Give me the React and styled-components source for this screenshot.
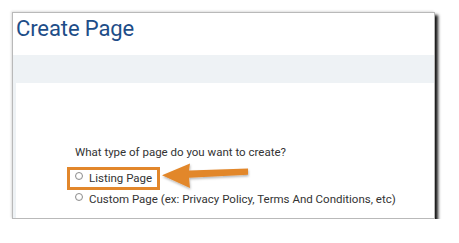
import React from "react";
import styled, { createGlobalStyle } from "styled-components";

const Global = createGlobalStyle`
  html, body { margin: 0; padding: 0; background: #ffffff; }
  body { font-family: Roboto, "Liberation Sans", Arial, sans-serif; }
`;

const Frame = styled.div`
  position: relative;
  box-sizing: border-box;
  margin: 12px 0 0 12px;
  width: 423px;
  height: 207px;
  background: #ffffff;
  border: 1px solid #b9b9b9;
  box-shadow: 3px 3px 3px rgba(0, 0, 0, 0.92), -1px -1px 2px rgba(0, 0, 0, 0.12);
  display: flex;
  flex-direction: column;
`;

const Title = styled.h1`
  margin: 0;
  height: 42px;
  box-sizing: border-box;
  padding: 3px 0 0 3px;
  font-size: 22px;
  font-weight: 400;
  line-height: 26px;
  color: #1d4d88;
  letter-spacing: -0.1px;
`;

const Band = styled.div`
  height: 28px;
  background: #eef2f5;
`;

const Content = styled.div`
  flex: 1;
  border-left: 3px solid #eef2f5;
  padding: 61px 0 0 59px;
  color: #333333;
  font-size: 11.5px;
`;

const Question = styled.div`
  line-height: 16px;
  margin-bottom: 8px;
`;

const Row = styled.label`
  position: relative;
  display: flex;
  align-items: flex-start;
  gap: 6px;
  height: 21px;
  line-height: 21px;
  white-space: nowrap;
`;

const Radio = styled.span`
  flex: none;
  box-sizing: border-box;
  width: 8px;
  height: 8px;
  margin-top: 4px;
  border-radius: 50%;
  border: 1px solid #8e8e8e;
  background: radial-gradient(circle at 50% 40%, #ffffff 40%, #e6e6e6 100%);
`;

const Highlight = styled.span`
  position: absolute;
  left: -8px;
  top: -1px;
  width: 93px;
  height: 23px;
  box-sizing: border-box;
  border: 3px solid #e2872b;
  pointer-events: none;
`;

const Arrow = styled.svg`
  position: absolute;
  left: 85px;
  top: -10px;
  overflow: visible;
  pointer-events: none;
`;

function Option({ label, highlighted }) {
  return (
    <Row>
      <Radio />
      <span>{label}</span>
      {highlighted && (
        <>
          <Highlight />
          <Arrow width="95" height="40" viewBox="0 0 95 40">
            <defs>
              <filter id="sh" x="-20%" y="-40%" width="140%" height="180%">
                <feDropShadow dx="0.5" dy="1.5" stdDeviation="1" floodColor="#000" floodOpacity="0.3" />
              </filter>
            </defs>
            <polygon
              points="2,17.3 30,5.6 29,12.6 88,10.6 88,16.8 29,19.8 30,30.1"
              fill="#e2872b"
              filter="url(#sh)"
            />
          </Arrow>
        </>
      )}
    </Row>
  );
}

export default function App() {
  return (
    <>
      <Global />
      <Frame>
        <Title>Create Page</Title>
        <Band />
        <Content>
          <Question>What type of page do you want to create?</Question>
          <Option label="Listing Page" highlighted />
          <Option label="Custom Page (ex: Privacy Policy, Terms And Conditions, etc)" />
        </Content>
      </Frame>
    </>
  );
}
